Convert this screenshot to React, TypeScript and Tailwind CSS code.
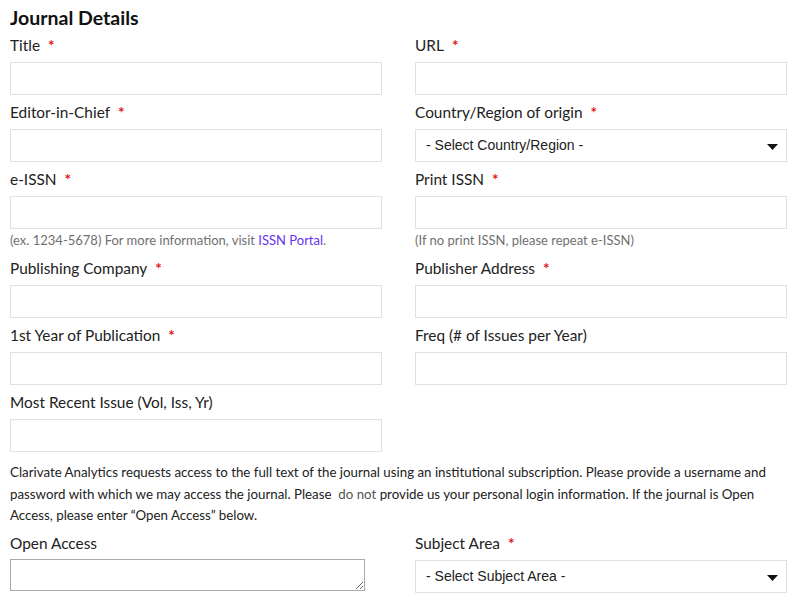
import type { ReactNode } from "react";

const labelFont = { fontFamily: "Lato, 'Open Sans', sans-serif" };

function Label({ text, required }: { text: string; required?: boolean }) {
  return (
    <label className="block h-[22px] text-[15.4px] leading-[22px] text-[#222]">
      {text}
      {required ? <span className="ml-[8px] font-bold text-[#e0151b]">*</span> : null}
    </label>
  );
}

function TextInput() {
  return <input type="text" className="mt-[6px] block h-[33px] w-full border border-[#e1e1e1] bg-white px-2 outline-none" />;
}

function SelectBox({ placeholder }: { placeholder: string }) {
  return (
    <div className="relative mt-[6px] h-[33px] w-full border border-[#e1e1e1] bg-white">
      <select
        className="h-full w-full appearance-none bg-transparent pl-[10px] text-[14px] text-[#222] outline-none"
        style={{ fontFamily: "'Liberation Sans', Arial, sans-serif" }}
        defaultValue=""
      >
        <option value="">{placeholder}</option>
      </select>
      <svg className="pointer-events-none absolute right-[8px] top-[14px]" width="11" height="6" viewBox="0 0 11 6">
        <path d="M0 0h11L5.5 6z" fill="#111" />
      </svg>
    </div>
  );
}

function Field({ label, required, children }: { label: string; required?: boolean; children?: ReactNode }) {
  return (
    <div>
      <Label text={label} required={required} />
      {children ?? <TextInput />}
    </div>
  );
}

function Help({ children }: { children: ReactNode }) {
  return <p className="h-[22px] text-[13px] leading-[22px] text-[#707070]">{children}</p>;
}

export default function App() {
  return (
    <div className="min-h-[604px] bg-white px-[10px] pt-[6px]" style={labelFont}>
      <h2 className="h-[28px] text-[19.5px] font-bold leading-[24px] text-[#111]">Journal Details</h2>

      <div className="grid w-[777px] grid-cols-[372px_372px] gap-x-[33px] gap-y-[6px]">
        <Field label="Title" required />
        <Field label="URL" required />

        <Field label="Editor-in-Chief" required />
        <Field label="Country/Region of origin" required>
          <SelectBox placeholder="- Select Country/Region -" />
        </Field>

        <div>
          <Field label="e-ISSN" required />
          <Help>
            (ex. 1234-5678) For more information, visit <a className="text-[#6633ee]">ISSN Portal</a>.
          </Help>
        </div>
        <div>
          <Field label="Print ISSN" required />
          <Help>(If no print ISSN, please repeat e-ISSN)</Help>
        </div>

        <Field label="Publishing Company" required />
        <Field label="Publisher Address" required />

        <Field label="1st Year of Publication" required />
        <Field label="Freq (# of Issues per Year)" />

        <Field label="Most Recent Issue (Vol, Iss, Yr)" />
        <div />
      </div>

      <p className="mt-[10px] w-[777px] whitespace-nowrap text-[13.3px] leading-[21.5px] text-[#222]">
        Clarivate Analytics requests access to the full text of the journal using an institutional subscription. Please provide a
        username and
        <br />
        password with which we may access the journal. Please&nbsp; <span className="text-[#555]">do not</span> provide us your
        personal login information. If the journal is Open
        <br />
        Access, please enter “Open Access” below.
      </p>

      <div className="mt-[5px] grid w-[777px] grid-cols-[372px_372px] gap-x-[33px]">
        <div>
          <Label text="Open Access" />
          <textarea className="mt-[5px] block h-[32px] w-[355px] border border-[#a9a9a9] bg-white" />
        </div>
        <Field label="Subject Area" required>
          <SelectBox placeholder="- Select Subject Area -" />
        </Field>
      </div>
    </div>
  );
}
